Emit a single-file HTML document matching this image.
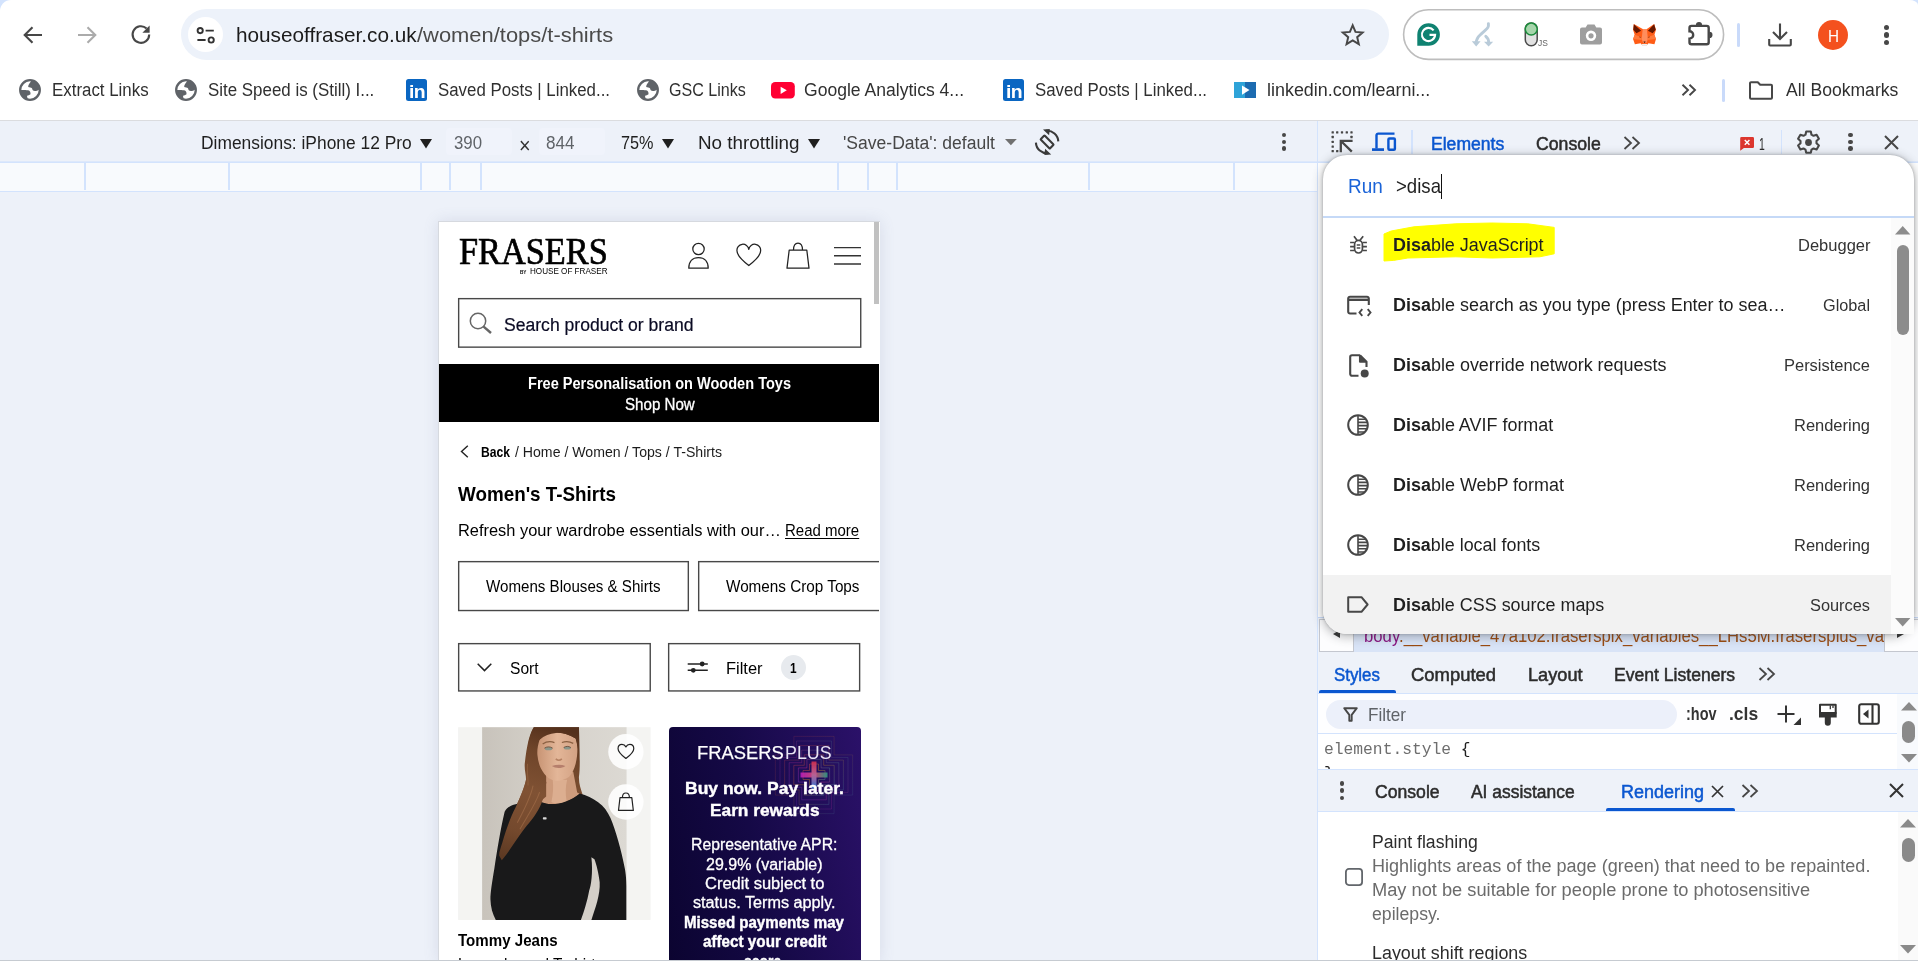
<!DOCTYPE html>
<html lang="en"><head><meta charset="utf-8"><title>Women's T-Shirts - DevTools</title>
<style>

html,body{margin:0;padding:0}
body{width:1918px;height:961px;overflow:hidden;position:relative;background:#fff;font-family:"Liberation Sans","DejaVu Sans",sans-serif;color:#1f1f1f}
body div,body svg,.t{position:absolute}
.t{white-space:nowrap;transform-origin:0 0;line-height:1;display:block}
svg{overflow:visible}
b{font-weight:700}

</style></head>
<body>
<div style="left:0px;top:0px;width:1918px;height:12px;background:#d3e3fd"></div>
<div style="left:0px;top:0px;width:1918px;height:120px;background:#fff;border-radius:11px 9px 0 0/11px 5px 0 0"></div>
<svg style="left:20px;top:22px;" width="26" height="26" viewBox="0 0 26 26"><path d="M22 13H5M12.5 5.2 4.7 13l7.8 7.8" fill="none" stroke="#474747" stroke-width="2.1" stroke-linejoin="miter"/></svg>
<svg style="left:74px;top:22px;" width="26" height="26" viewBox="0 0 26 26"><path d="M4 13h17M13.5 5.2 21.3 13l-7.8 7.8" fill="none" stroke="#ababab" stroke-width="2.1"/></svg>
<svg style="left:128px;top:22px;" width="26" height="26" viewBox="0 0 26 26"><path d="M21.2 12.5a8.3 8.3 0 1 1-2.6-6" fill="none" stroke="#474747" stroke-width="2.1"/><path d="M21.6 3.6v7.2h-7.2z" fill="#474747"/></svg>
<div style="left:181px;top:9px;width:1208px;height:51px;background:#edf2fa;border-radius:26px"></div>
<div style="left:188px;top:17px;width:35px;height:35px;background:#fff;border-radius:50%"></div>
<svg style="left:195px;top:24px;" width="22" height="22" viewBox="0 0 22 22"><g fill="none" stroke="#333" stroke-width="1.9"><circle cx="5.2" cy="6.6" r="2.6"/><path d="M10.6 6.6h8.2M2.4 16h8.2"/><circle cx="16.2" cy="16" r="2.6"/></g></svg>
<span class="t" style="left:235.8px;top:25px;font-size:20.6px;transform:scaleX(1.0074);color:#1b1b1b">houseoffraser.co.uk</span>
<span class="t" style="left:416.9px;top:25px;font-size:20.6px;transform:scaleX(1.0642);color:#4a4a4a">/women/tops/t-shirts</span>
<svg style="left:1341.3px;top:23px;" width="23.4" height="23.4" viewBox="0 0 26 26"><path d="M13 2.600l3.1 7.3 7.9.7-6 5.2 1.8 7.700L13 19.400l-6.8 4.100L8 15.8 2 10.600l7.9-.7z" fill="none" stroke="#474747" stroke-width="2.2" stroke-linejoin="miter"/></svg>
<svg style="left:1402px;top:8px;" width="324" height="54" viewBox="0 0 324 54"><rect x="1.6" y="1.8" width="320" height="49.6" rx="24.8" fill="none" stroke="#bdbdbd" stroke-width="1.6"/></svg>
<svg style="left:1416px;top:22px;" width="25" height="25" viewBox="0 0 25 25"><path d="M12.6 1.2a11.3 11.3 0 1 1 0 22.6H1.3V12.5A11.3 11.3 0 0 1 12.6 1.2z" fill="#0f8271"/><path d="M17.6 8.3a6.6 6.6 0 1 0 1.5 4.6h-5.6" fill="none" stroke="#fff" stroke-width="2.1"/></svg>
<svg style="left:1470px;top:20px;" width="26" height="28" viewBox="1470 20 26 28"><g fill="none" stroke="#b9cbd9" stroke-width="2.9" stroke-linecap="round"><path d="M1488.4 23.6v2.400c0 3-7.5 7-10.5 11.5-.8 1.5-1.5 3-1.8 4.5"/><path d="M1485.8 36.300c1.8 1.5 2.8 3.5 2.8 5.5"/></g><path d="M1471.8 41.200h8.800l-4.4 5.200zM1484 41.800h9.200l-4.6 4.600z" fill="#b9cbd9"/></svg>
<svg style="left:1524px;top:21px;" width="15" height="27" viewBox="1524 21 15 27"><rect x="1525.3" y="22.9" width="11.9" height="22.8" rx="5.95" fill="#e2e2e2" stroke="#4a4a4a" stroke-width="1.5"/><circle cx="1531.25" cy="29.1" r="6" fill="#a6d5ab" stroke="#1a8a3a" stroke-width="1.5"/></svg>
<span class="t" style="left:1538.4px;top:38.9px;font-size:8.8px;transform:scaleX(0.9629);color:#666">JS</span>
<svg style="left:1579px;top:24px;" width="24" height="22" viewBox="0 0 24 22"><path d="M8.5 0.500h7l1.8 3H21a2 2 0 0 1 2 2v13a2 2 0 0 1-2 2H3a2 2 0 0 1-2-2v-13a2 2 0 0 1 2-2h3.700z" fill="#9e9e9e"/><circle cx="12" cy="11.8" r="5.2" fill="#fff"/><circle cx="12" cy="11.8" r="2.6" fill="#9e9e9e"/></svg>
<svg style="left:1626px;top:14px;" width="100" height="42" viewBox="0 0 1918 806"><path d="M150 190 320 290h80L540 190l35 110-30 100 30 80-30 100-115-20-30 40h-90l-30-40-110 20-35-100 30-80-30-100z" fill="#ff5c16"/><path d="M150 195 290 320l-90 50-60-70zM540 195l30 105-60 70-90-50z" fill="#661800"/><path d="M320 290h80l20 190-30 80h-60l-30-80z" fill="#ff8d5d"/><path d="M165 400l135 40v60l-160-20zM545 400l-135 40v60l160-20z" fill="#ff7a3c"/><path d="M255 425l40 22-30 8zM455 425l-40 22 30 8z" fill="#8a2a08"/><path d="M335 528h40l-10 26h-20z" fill="#3d0c00"/><path d="M296 578h118l-22 28h-74z" fill="#e9f2f7"/></svg>
<svg style="left:1686px;top:19px;" width="28" height="28" viewBox="1686 19 28 28"><path d="M1691.5 25.900H1706.700a2 2 0 0 1 2 2V42.300a2 2 0 0 1-2 2H1691.500a2 2 0 0 1-2-2V38.600a3.7 3.7 0 0 0 0-7.400V27.900a2 2 0 0 1 2-2z" fill="none" stroke="#474747" stroke-width="2.4"/><path d="M1695.9 25.200a3.1 3.1 0 0 1 6.2 0zM1709.4 31.800a3.1 3.1 0 0 1 0 6.200z" fill="#474747"/></svg>
<div style="left:1737px;top:22.5px;width:3px;height:24px;background:#c9dafa;border-radius:1.500px"></div>
<svg style="left:1767px;top:22px;" width="26" height="26" viewBox="0 0 26 26"><path d="M13 1.500v15M6 10l7 7 7-7M2.2 17v5.500a1 1 0 0 0 1 1h19.600a1 1 0 0 0 1-1V17" fill="none" stroke="#474747" stroke-width="2.1"/></svg>
<div style="left:1818px;top:20px;width:30px;height:30px;background:#f4511e;border-radius:50%"></div>
<span class="t" style="left:1827.5px;top:27.5px;font-size:16.5px;transform:scaleX(0.9227);color:#fff">H</span>
<div style="left:1884.3px;top:24.6px;width:5.2px;height:5.2px;background:#474747;border-radius:50%"></div>
<div style="left:1884.3px;top:32.4px;width:5.2px;height:5.2px;background:#474747;border-radius:50%"></div>
<div style="left:1884.3px;top:40.2px;width:5.2px;height:5.2px;background:#474747;border-radius:50%"></div>
<svg style="left:19px;top:79px;" width="22" height="22" viewBox="0 0 22 22"><circle cx="11" cy="11" r="9.8" fill="#fff" stroke="#5f6368" stroke-width="2.3"/><path d="M12.4 1.500C10.7 4.3 9 6 9.2 8c1.3.6 2.8.4 3.8 1.3.3.9.4 1.7 1 2.3 1.5.7 3.8.6 6.2-1.200L20.5 7 17 3zM1.5 11c3.5-.2 6.5-.2 8.5.5 1.3.8 1.6 2 1.5 3.8-1 1-2.5 1-3.4 1.5-.2.8.2 1.6.9 3.200L5.5 18.5 2 15z" fill="#5f6368"/></svg>
<span class="t" style="left:51.7px;top:82px;font-size:17.6px;transform:scaleX(0.9591);color:#303030">Extract Links</span>
<svg style="left:175px;top:79px;" width="22" height="22" viewBox="0 0 22 22"><circle cx="11" cy="11" r="9.8" fill="#fff" stroke="#5f6368" stroke-width="2.3"/><path d="M12.4 1.500C10.7 4.3 9 6 9.2 8c1.3.6 2.8.4 3.8 1.3.3.9.4 1.7 1 2.3 1.5.7 3.8.6 6.2-1.200L20.5 7 17 3zM1.5 11c3.5-.2 6.5-.2 8.5.5 1.3.8 1.6 2 1.5 3.8-1 1-2.5 1-3.4 1.5-.2.8.2 1.6.9 3.200L5.5 18.5 2 15z" fill="#5f6368"/></svg>
<span class="t" style="left:207.5px;top:82px;font-size:17.6px;transform:scaleX(0.9608);color:#303030">Site Speed is (Still) I...</span>
<div style="left:405.7px;top:79.3px;width:21.6px;height:21.6px;background:#0a66c2;border-radius:2.5px"></div>
<span class="t" style="left:408.6px;top:82.6px;font-size:18.5px;transform:scaleX(1.0483);color:#fff;letter-spacing:-.5px"><b>in</b></span>
<span class="t" style="left:438px;top:82px;font-size:17.6px;transform:scaleX(0.9575);color:#303030">Saved Posts | Linked...</span>
<svg style="left:636.8px;top:79px;" width="22" height="22" viewBox="0 0 22 22"><circle cx="11" cy="11" r="9.8" fill="#fff" stroke="#5f6368" stroke-width="2.3"/><path d="M12.4 1.500C10.7 4.3 9 6 9.2 8c1.3.6 2.8.4 3.8 1.3.3.9.4 1.7 1 2.3 1.5.7 3.8.6 6.2-1.200L20.5 7 17 3zM1.5 11c3.5-.2 6.5-.2 8.5.5 1.3.8 1.6 2 1.5 3.8-1 1-2.5 1-3.4 1.5-.2.8.2 1.6.9 3.200L5.5 18.5 2 15z" fill="#5f6368"/></svg>
<span class="t" style="left:669.3px;top:82px;font-size:17.6px;transform:scaleX(0.9145);color:#303030">GSC Links</span>
<svg style="left:770.8px;top:81.8px;" width="23.8" height="16.6" viewBox="0 0 23.8 16.6"><rect width="23.8" height="16.6" rx="4.2" fill="#ff0033"/><path d="M9.6 4.700v7.200l6.2-3.600z" fill="#fff"/></svg>
<span class="t" style="left:804.3px;top:82px;font-size:17.6px;transform:scaleX(0.9976);color:#303030">Google Analytics 4...</span>
<div style="left:1002.7px;top:79.3px;width:21.6px;height:21.6px;background:#0a66c2;border-radius:2.5px"></div>
<span class="t" style="left:1005.6px;top:82.6px;font-size:18.5px;transform:scaleX(1.0483);color:#fff;letter-spacing:-.5px"><b>in</b></span>
<span class="t" style="left:1035.3px;top:82px;font-size:17.6px;transform:scaleX(0.9575);color:#303030">Saved Posts | Linked...</span>
<div style="left:1233.8px;top:82px;width:22px;height:16.2px;background:linear-gradient(90deg,#2ea3d8 0 50%,#1c6bb0 50%)"></div>
<svg style="left:1233.8px;top:82px;" width="22" height="16.2" viewBox="0 0 22 16.2"><path d="M8 3.500v9.200l7.5-4.600z" fill="#fff"/></svg>
<span class="t" style="left:1266.5px;top:82px;font-size:17.6px;transform:scaleX(1.0182);color:#303030">linkedin.com/learni...</span>
<svg style="left:1681px;top:84px;" width="16" height="12" viewBox="0 0 16 12"><path d="M1.5 0.8 7 6l-5.5 5.200M8.5 0.8 14 6l-5.5 5.2" fill="none" stroke="#474747" stroke-width="1.9"/></svg>
<div style="left:1722px;top:78.5px;width:3px;height:23.5px;background:#c9dafa;border-radius:1.500px"></div>
<svg style="left:1749px;top:80.5px;" width="24" height="19" viewBox="0 0 24 19"><path d="M2 1.200h6.800l2.4 2.600H22a1 1 0 0 1 1 1V16.800a1 1 0 0 1-1 1H2a1 1 0 0 1-1-1V2.200a1 1 0 0 1 1-1z" fill="none" stroke="#474747" stroke-width="2" stroke-linejoin="round"/></svg>
<span class="t" style="left:1785.5px;top:82px;font-size:17.6px;transform:scaleX(0.9988);color:#303030">All Bookmarks</span>
<div style="left:0px;top:120px;width:1918px;height:1px;background:#dbdcdf"></div>
<div style="left:0px;top:121px;width:1918px;height:840px;background:#edf1f9"></div>
<div style="left:0px;top:161px;width:1318px;height:1px;background:#dde8fb"></div>
<div style="left:0px;top:162px;width:1318px;height:1px;background:#d3e3fd"></div>
<div style="left:0px;top:163px;width:1318px;height:28px;background:#f8fafd"></div>
<div style="left:0px;top:191px;width:1318px;height:1px;background:#d3e3fd"></div>
<div style="left:83.5px;top:163px;width:2px;height:27px;background:#d3e3fd"></div>
<div style="left:228px;top:163px;width:2px;height:27px;background:#d3e3fd"></div>
<div style="left:419.5px;top:163px;width:2px;height:27px;background:#d3e3fd"></div>
<div style="left:448.5px;top:163px;width:2px;height:27px;background:#d3e3fd"></div>
<div style="left:479.5px;top:163px;width:2px;height:27px;background:#d3e3fd"></div>
<div style="left:837px;top:163px;width:2px;height:27px;background:#d3e3fd"></div>
<div style="left:866.5px;top:163px;width:2px;height:27px;background:#d3e3fd"></div>
<div style="left:895.5px;top:163px;width:2px;height:27px;background:#d3e3fd"></div>
<div style="left:1088px;top:163px;width:2px;height:27px;background:#d3e3fd"></div>
<div style="left:1232.5px;top:163px;width:2px;height:27px;background:#d3e3fd"></div>
<span class="t" style="left:201.3px;top:135.3px;font-size:17.6px;transform:scaleX(0.9883);color:#1f1f1f">Dimensions: iPhone 12 Pro</span>
<svg style="left:420.3px;top:138.5px;" width="12" height="9.5" viewBox="0 0 12 9.5"><path d="M0 0h12L6 9.500z" fill="#1f1f1f"/></svg>
<div style="left:446px;top:128px;width:66px;height:27px;background:#f0f3fb;border-radius:4px"></div>
<div style="left:539px;top:128px;width:66px;height:27px;background:#f0f3fb;border-radius:4px"></div>
<span class="t" style="left:454px;top:135.3px;font-size:17.6px;transform:scaleX(0.9537);color:#5f6368">390</span>
<span class="t" style="left:519.4px;top:134.6px;font-size:22.5px;transform:scaleX(0.8828);color:#333">×</span>
<span class="t" style="left:546px;top:135.3px;font-size:17.6px;transform:scaleX(0.9707);color:#5f6368">844</span>
<span class="t" style="left:620.5px;top:135.3px;font-size:17.6px;transform:scaleX(0.9228);color:#1f1f1f">75%</span>
<svg style="left:662px;top:138.5px;" width="12" height="9.5" viewBox="0 0 12 9.5"><path d="M0 0h12L6 9.500z" fill="#1f1f1f"/></svg>
<span class="t" style="left:697.5px;top:135.3px;font-size:17.6px;transform:scaleX(1.07);color:#1f1f1f">No throttling</span>
<svg style="left:807.5px;top:138.5px;" width="12" height="9.5" viewBox="0 0 12 9.5"><path d="M0 0h12L6 9.500z" fill="#1f1f1f"/></svg>
<span class="t" style="left:843px;top:135.3px;font-size:17.6px;transform:scaleX(0.997);color:#474747">'Save-Data': default</span>
<svg style="left:1005.1px;top:138.9px;" width="11.8" height="6.2" viewBox="0 0 11.8 6.2"><path d="M0 0h11.800L5.9 6.200z" fill="#707070"/></svg>
<svg style="left:1032px;top:127px;" width="30" height="30" viewBox="1032 127 30 30"><g fill="none" stroke="#3a3a3a" stroke-width="2.1"><rect x="1044.3" y="135.45" width="5.6" height="13.1" rx=".6" transform="rotate(-45 1047.1 142)"/><path d="M1046.1 130.800A11.2 11.2 0 0 1 1058.3 141.400M1035.9 142.600A11.2 11.2 0 0 0 1048.1 153.2"/></g><path d="M1043 129.600l6.8-.5-.7 6.200zM1051.2 154.400l-6.8.5.7-6.200z" fill="#3a3a3a"/></svg>
<div style="left:1281.5px;top:132.8px;width:4.6px;height:4.6px;background:#474747;border-radius:50%"></div>
<div style="left:1281.5px;top:139.6px;width:4.6px;height:4.6px;background:#474747;border-radius:50%"></div>
<div style="left:1281.5px;top:146.4px;width:4.6px;height:4.6px;background:#474747;border-radius:50%"></div>
<div style="left:438px;top:221px;width:442px;height:741px;background:#d6d9df;box-shadow:0 0 14px rgba(100,112,150,.16)"></div>
<div style="left:439px;top:222px;width:441px;height:739px;background:#fff;overflow:hidden">
<span class="t" style="left:19.5px;top:10.7px;font-size:37.8px;transform:scaleX(0.908);color:#000;-webkit-text-stroke:.7px #000;font-family:'Liberation Serif','DejaVu Serif',serif">FRASERS</span>
<span class="t" style="left:80.8px;top:46.6px;font-size:6.2px;transform:scaleX(0.755);color:#000;font-weight:700">BY</span>
<span class="t" style="left:90.5px;top:43.6px;font-size:9.6px;transform:scaleX(0.8453);color:#000">HOUSE OF FRASER</span>
<svg style="left:249px;top:20px;" width="21" height="27" viewBox="0 0 21 27"><g fill="none" stroke="#222" stroke-width="1.25"><circle cx="10.5" cy="7" r="5.7"/><path d="M0.8 26.2c0-6.5 3.5-10.6 9.7-10.6s9.7 4.1 9.7 10.600z" stroke-linejoin="round"/></g></svg>
<svg style="left:296.5px;top:21.5px;" width="26" height="23" viewBox="0 0 26 23"><path d="M12.8 21.500C5 15.5 1 11.5 1 7a5.8 5.8 0 0 1 11.8-1.600A5.8 5.8 0 0 1 24.6 7c0 4.5-4 8.5-11.8 14.500z" fill="none" stroke="#222" stroke-width="1.25" stroke-linejoin="round"/></svg>
<svg style="left:347px;top:20px;" width="24" height="27" viewBox="0 0 24 27"><g fill="none" stroke="#222" stroke-width="1.25" stroke-linejoin="round"><path d="M3.2 8h17.600l2.2 18.200H1z"/><path d="M7.5 8c0-4.5 1.8-7 4.5-7s4.5 2.5 4.5 7"/></g></svg>
<svg style="left:395px;top:22px;" width="27" height="24" viewBox="0 0 27 24"><path d="M0 3.600h27M0 11.700h27M0 20h27" stroke="#333" stroke-width="1.35" fill="none"/></svg>
<div style="left:435.3px;top:0px;width:4.7px;height:81.6px;background:#c1c1c1"></div>
<svg style="left:18.8px;top:76.2px;" width="403.4" height="49.8" viewBox="0 0 403.4 49.8"><rect x="0.65" y="0.65" width="402.09999999999997" height="48.5" fill="none" stroke="#484848" stroke-width="1.4"/></svg>
<svg style="left:30px;top:90px;" width="23" height="22" viewBox="0 0 23 22"><circle cx="9" cy="9" r="7.7" fill="none" stroke="#666" stroke-width="1.5"/><path d="M14.6 14.6 22 21" stroke="#666" stroke-width="2.4" fill="none"/></svg>
<span class="t" style="left:65px;top:93.5px;font-size:18px;transform:scaleX(0.9762);color:#0a0a23;-webkit-text-stroke:.2px #0a0a23">Search product or brand</span>
<div style="left:0px;top:142px;width:440.2px;height:58.4px;background:#000"></div>
<span class="t" style="left:89px;top:154px;font-size:15.8px;transform:scaleX(0.921);color:#fff"><b>Free Personalisation on Wooden Toys</b></span>
<span class="t" style="left:185.5px;top:175px;font-size:15.8px;transform:scaleX(0.9562);color:#fff;-webkit-text-stroke:.3px #fff">Shop Now</span>
<svg style="left:21px;top:223px;" width="9" height="13" viewBox="0 0 9 13"><path d="M7.8 0.8 1.5 6.500l6.3 5.7" fill="none" stroke="#222" stroke-width="1.4"/></svg>
<span class="t" style="left:42px;top:222.8px;font-size:14.6px;transform:scaleX(0.8312);color:#000"><b>Back</b></span>
<span class="t" style="left:76.2px;top:222.8px;font-size:14.6px;transform:scaleX(0.9667);color:#1c1c1c">/ Home / Women / Tops / T-Shirts</span>
<span class="t" style="left:19.4px;top:262px;font-size:20.25px;transform:scaleX(0.9297);color:#000"><b>Women's T-Shirts</b></span>
<span class="t" style="left:19.4px;top:300.8px;font-size:16.9px;transform:scaleX(0.9713);color:#000">Refresh your wardrobe essentials with our…</span>
<span class="t" style="left:345.8px;top:300.8px;font-size:16.9px;transform:scaleX(0.888);color:#000"><span style="text-decoration:underline;text-underline-offset:2px">Read more</span></span>
<svg style="left:18.9px;top:339.2px;" width="231" height="50.2" viewBox="0 0 231 50.2"><rect x="0.65" y="0.65" width="229.7" height="48.9" fill="none" stroke="#484848" stroke-width="1.4"/></svg>
<span class="t" style="left:47.2px;top:357.4px;font-size:15.8px;transform:scaleX(0.9571);color:#000">Womens Blouses &amp; Shirts</span>
<svg style="left:258.7px;top:339.2px;" width="231" height="50.2" viewBox="0 0 231 50.2"><rect x="0.65" y="0.65" width="229.7" height="48.9" fill="none" stroke="#484848" stroke-width="1.4"/></svg>
<span class="t" style="left:286.8px;top:357.4px;font-size:15.8px;transform:scaleX(0.9664);color:#000">Womens Crop Tops</span>
<svg style="left:18.9px;top:420.8px;" width="192.9" height="48.6" viewBox="0 0 192.9 48.6"><rect x="0.65" y="0.65" width="191.6" height="47.300000000000004" fill="none" stroke="#484848" stroke-width="1.4"/></svg>
<svg style="left:38px;top:441px;" width="15" height="9" viewBox="0 0 15 9"><path d="M0.7 0.7 7.5 7.600l6.8-6.9" fill="none" stroke="#222" stroke-width="1.5"/></svg>
<span class="t" style="left:70.6px;top:439px;font-size:16.9px;transform:scaleX(0.923);color:#000">Sort</span>
<svg style="left:229.2px;top:420.8px;" width="192.7" height="48.6" viewBox="0 0 192.7 48.6"><rect x="0.65" y="0.65" width="191.0" height="47.300000000000004" fill="none" stroke="#484848" stroke-width="1.4"/></svg>
<svg style="left:247px;top:438px;" width="24" height="15" viewBox="686 660 24 15"><g stroke="#222" stroke-width="1.4" fill="#222"><path d="M687.7 664h20.100M687.7 670.300h20.1" fill="none"/><circle cx="702.2" cy="664" r="2.4" stroke="none"/><circle cx="693.3" cy="670.3" r="2.4" stroke="none"/></g></svg>
<span class="t" style="left:286.8px;top:439px;font-size:16.9px;transform:scaleX(0.9748);color:#000">Filter</span>
<div style="left:342px;top:432.8px;width:25.4px;height:25.4px;background:#e7eaee;border-radius:50%"></div>
<span class="t" style="left:351.4px;top:437.8px;font-size:15px;transform:scaleX(0.791);color:#000"><b>1</b></span>
<svg style="left:11px;top:498px;" width="210" height="210" viewBox="0 0 961 961"><defs><linearGradient id="pg" x1="0" x2="1" y1="0" y2="0"><stop offset="0" stop-color="#c8c3bb"/><stop offset=".45" stop-color="#d5d1ca"/><stop offset="1" stop-color="#dcd9d3"/></linearGradient><linearGradient id="hg" gradientUnits="userSpaceOnUse" x1="480" y1="30" x2="300" y2="640"><stop offset="0" stop-color="#54301c"/><stop offset=".2" stop-color="#6e4429"/><stop offset=".5" stop-color="#805234"/><stop offset=".8" stop-color="#74492d"/><stop offset="1" stop-color="#5e3a23"/></linearGradient><linearGradient id="sk" x1="0" x2="1" y1="0" y2="0"><stop offset="0" stop-color="#c89474"/><stop offset=".5" stop-color="#e3b698"/><stop offset="1" stop-color="#d3a284"/></linearGradient><clipPath id="pc"><rect x="147" y="33" width="661" height="882"/></clipPath></defs>
<rect x="37" y="33" width="881" height="882" fill="#f4f4f2"/>
<rect x="147" y="33" width="661" height="882" fill="url(#pg)"/>
<g clip-path="url(#pc)">
<path d="M385 30C365 60 352 110 342 200c-2 30 6 50 6 72-4 26-22 72-48 128-22 40-46 110-60 160-8 26-16 46-15 60l12 22 370-300c-8-26-18-50-17-82 6-36 4-100 0-230z" fill="url(#hg)"/>
<path d="M440 250v100l-28 24c40 24 120 16 182-36l-12-6-18-95z" fill="#cd9b7c"/>
<path d="M470 275c4 30 2 66-6 100 20 10 46 8 70-2-6-34-6-70 2-100z" fill="#dcae90"/>
<path d="M410 90c-8 24-12 48-10 70 2 24 8 44 15 60 10 20 22 36 35 45 16 10 34 14 50 13 16-2 32-8 45-18 14-14 24-36 30-60 6-24 8-48 8-70 0-16-2-32-8-45-30-20-60-28-90-26-28 2-54 12-75 31z" fill="url(#sk)"/>
<path d="M385 30c-16 30-24 60-28 90 16-4 36-14 53-30 10-14 24-24 42-30 40-8 84 0 123 25 4 14 8 30 8 50 6-36 8-70 7-105z" fill="url(#hg)"/>
<path d="M424 110c16-11 36-13 54-7M512 103c16-6 36-5 52 4" stroke="#8a6042" stroke-width="6" fill="none"/>
<ellipse cx="451" cy="131" rx="17" ry="7" fill="#8a968a"/><ellipse cx="537" cy="128" rx="16" ry="7" fill="#8a968a"/>
<path d="M432 129c12-8 26-8 38 0M520 126c11-7 23-7 33 0" stroke="#58402f" stroke-width="3.5" fill="none"/>
<path d="M484 178c8 7 20 7 28 0" stroke="#b68264" stroke-width="7" fill="none"/>
<path d="M466 211c20-8 44-8 62-1-16 12-44 13-62 1z" fill="#b67f6c"/>
<path d="M250 420c10-20 30-30 50-35 30-9 72-14 112-13 40 24 120 16 182-36 30 8 60 22 84 40 26 18 44 44 57 74 24 60 48 140 65 230 4 20 8 60 8 80v160H212c-16-30-26-60-27-100 0-30 8-80 18-140 12-80 28-180 47-260z" fill="#19191a"/>
<path d="M647 628C655 700 645 760 637 780 628 830 612 880 599 915L647 915C665 860 688 800 685 742 680 700 670 660 661 637z" fill="#d4cfc8"/>
<path d="M348 272c-4 26-22 72-48 128-22 40-46 110-60 160-8 26-16 46-15 60l12 22c20-24 38-50 54-74 20-30 40-60 60-84 24-28 50-60 68-104 10-24 16-50 22-96-12-10-24-24-32-40z" fill="url(#hg)"/>
<path d="M380 300c-10 50-40 110-72 170M410 330c-16 50-50 100-90 170" stroke="#a8724c" stroke-width="5" fill="none" opacity=".55"/>
<path d="M355 200c-4 40 4 70 2 100" stroke="#a8724c" stroke-width="5" fill="none" opacity=".4"/>
<rect x="425" y="445" width="17" height="10" rx="3" fill="#d8d8d8"/>
</g>
<circle cx="805" cy="145" r="81" fill="#fff" fill-opacity=".88"/>
<circle cx="805" cy="375" r="81" fill="#fff" fill-opacity=".88"/>
<path d="M805 176c-27-21-36-32-36-45 0-11 8-19 18-19 7 0 14 4 18 11 4-7 11-11 18-11 10 0 18 8 18 19 0 13-9 24-36 45z" fill="none" stroke="#222" stroke-width="5.5" stroke-linejoin="round"/>
<path d="M778 355h54l7 59h-68z" fill="none" stroke="#222" stroke-width="5.5" stroke-linejoin="round"/><path d="M789 355c0-14 6-21 16-21s16 7 16 21" fill="none" stroke="#222" stroke-width="5.5"/>
</svg>
<span class="t" style="left:19.4px;top:710.5px;font-size:16.9px;transform:scaleX(0.894);color:#000"><b>Tommy Jeans</b></span>
<span class="t" style="left:19.4px;top:734.5px;font-size:16.9px;transform:scaleX(0.9065);color:#000">Long sleeved T-shirt</span>
<div style="left:440.2px;top:81.6px;width:1px;height:660px;background:#fff"></div>
<div style="left:229.8px;top:505.2px;width:192px;height:240px;background:linear-gradient(78deg,#0b0430 0%,#150946 45%,#2b1169 100%);border-radius:4px 4px 0 0;overflow:hidden">
<svg style="left:99.9px;top:2.6px;" width="90" height="90" viewBox="-45 -45 90 90"><defs><linearGradient id="ph" x1="0" x2="1" y1="0" y2="0"><stop offset="0" stop-color="#c41fc0"/><stop offset=".5" stop-color="#e0507a"/><stop offset="1" stop-color="#2fa184"/></linearGradient><linearGradient id="pv" x1="0" x2="0" y1="0" y2="1"><stop offset="0" stop-color="#e0304f"/><stop offset=".5" stop-color="#d070a0"/><stop offset="1" stop-color="#2f86e6"/></linearGradient><linearGradient id="ps0" x1="0" x2="1" y1="0" y2="1"><stop offset="0" stop-color="#d02a5a"/><stop offset=".5" stop-color="#c07a20"/><stop offset="1" stop-color="#2a8ac8"/></linearGradient><linearGradient id="ps1" x1="0" x2="1" y1="1" y2="0"><stop offset="0" stop-color="#6a3ad0"/><stop offset=".5" stop-color="#c02a8a"/><stop offset="1" stop-color="#2a9a8a"/></linearGradient><filter id="pb" x="-30%" y="-30%" width="160%" height="160%"><feGaussianBlur stdDeviation=".7"/></filter></defs><path d="M-4.5 -11.0h9.0v6.5h6.5v9.0h-6.5v6.5h-9.0v-6.5h-6.5v-9.0h6.5z" fill="none" stroke="url(#ps0)" stroke-width=".9" opacity="0.5"/><path d="M-7.1 -15.6h14.2v8.5h8.5v14.2h-8.5v8.5h-14.2v-8.5h-8.5v-14.2h8.5z" fill="none" stroke="url(#ps1)" stroke-width=".9" opacity="0.45"/><path d="M-9.7 -20.2h19.4v10.5h10.5v19.4h-10.5v10.5h-19.4v-10.5h-10.5v-19.4h10.5z" fill="none" stroke="url(#ps0)" stroke-width=".9" opacity="0.39"/><path d="M-12.3 -24.799999999999997h24.6v12.499999999999996h12.499999999999996v24.6h-12.499999999999996v12.499999999999996h-24.6v-12.499999999999996h-12.499999999999996v-24.6h12.499999999999996z" fill="none" stroke="url(#ps1)" stroke-width=".9" opacity="0.33"/><path d="M-14.9 -29.4h29.8v14.499999999999998h14.499999999999998v29.8h-14.499999999999998v14.499999999999998h-29.8v-14.499999999999998h-14.499999999999998v-29.8h14.499999999999998z" fill="none" stroke="url(#ps0)" stroke-width=".9" opacity="0.28"/><path d="M-17.5 -34.0h35.0v16.5h16.5v35.0h-16.5v16.5h-35.0v-16.5h-16.5v-35.0h16.5z" fill="none" stroke="url(#ps1)" stroke-width=".9" opacity="0.22"/><path d="M-20.1 -38.599999999999994h40.2v18.499999999999993h18.499999999999993v40.2h-18.499999999999993v18.499999999999993h-40.2v-18.499999999999993h-18.499999999999993v-40.2h18.499999999999993z" fill="none" stroke="url(#ps0)" stroke-width=".9" opacity="0.17"/><g filter="url(#pb)" opacity=".85"><rect x="-13.5" y="-2.5" width="27" height="5" fill="url(#ph)"/><rect x="-2.5" y="-13.5" width="5" height="27" fill="url(#pv)"/></g></svg>
<span class="t" style="left:28.5px;top:16.1px;font-size:19.2px;transform:scaleX(0.9565);color:#fff"><span style="-webkit-text-stroke:.25px #fff">FRASERS</span></span>
<span class="t" style="left:116.6px;top:16.1px;font-size:19.2px;transform:scaleX(0.9297);color:#e8e4f4">PLUS</span>
<span class="t" style="left:16.4px;top:52.8px;font-size:17.3px;transform:scaleX(1.0129);color:#fff;-webkit-text-stroke:.4px #fff"><b>Buy now. Pay later.</b></span>
<span class="t" style="left:41.1px;top:74.8px;font-size:17.3px;transform:scaleX(0.9999);color:#fff;-webkit-text-stroke:.4px #fff"><b>Earn rewards</b></span>
<span class="t" style="left:22.5px;top:110.1px;font-size:15.8px;transform:scaleX(0.9984);color:#fff;-webkit-text-stroke:.3px #fff">Representative APR:</span>
<span class="t" style="left:37.5px;top:129.4px;font-size:15.8px;transform:scaleX(1.0128);color:#fff;-webkit-text-stroke:.3px #fff">29.9% (variable)</span>
<span class="t" style="left:35.8px;top:148.8px;font-size:15.8px;transform:scaleX(1.0459);color:#fff;-webkit-text-stroke:.3px #fff">Credit subject to</span>
<span class="t" style="left:24.4px;top:168px;font-size:15.8px;transform:scaleX(1.0258);color:#fff;-webkit-text-stroke:.3px #fff">status. Terms apply.</span>
<span class="t" style="left:15.7px;top:187.8px;font-size:15.8px;transform:scaleX(0.9541);color:#fff;-webkit-text-stroke:.4px #fff"><b>Missed payments may</b></span>
<span class="t" style="left:33.9px;top:207.1px;font-size:15.8px;transform:scaleX(0.9643);color:#fff;-webkit-text-stroke:.4px #fff"><b>affect your credit</b></span>
<span class="t" style="left:75.2px;top:227.1px;font-size:15.8px;transform:scaleX(0.8808);color:#fff;-webkit-text-stroke:.4px #fff"><b>score.</b></span>
</div>
</div>
<div style="left:1317px;top:121px;width:1px;height:840px;background:#d3e3fd"></div>
<div style="left:1318px;top:121px;width:600px;height:41px;background:#eef2f9"></div>
<div style="left:1318px;top:161px;width:600px;height:1px;background:#dde8fb"></div>
<div style="left:1318px;top:162px;width:600px;height:1px;background:#d3e3fd"></div>
<div style="left:1318px;top:163px;width:600px;height:457px;background:#fff"></div>
<svg style="left:1330px;top:130px;" width="24" height="24" viewBox="1330 130 24 24"><g fill="#474747"><rect x="1331.55" y="131.25" width="2.3" height="2.3" rx=".5"/><rect x="1336.05" y="131.25" width="2.3" height="2.3" rx=".5"/><rect x="1340.85" y="131.25" width="2.3" height="2.3" rx=".5"/><rect x="1345.65" y="131.25" width="2.3" height="2.3" rx=".5"/><rect x="1350.35" y="131.25" width="2.3" height="2.3" rx=".5"/><rect x="1331.55" y="135.85" width="2.3" height="2.3" rx=".5"/><rect x="1331.55" y="140.75" width="2.3" height="2.3" rx=".5"/><rect x="1331.55" y="145.45" width="2.3" height="2.3" rx=".5"/><rect x="1331.55" y="150.05" width="2.3" height="2.3" rx=".5"/><rect x="1350.35" y="135.85" width="2.3" height="2.3" rx=".5"/><rect x="1336.05" y="150.05" width="2.3" height="2.3" rx=".5"/></g><path d="M1352.6 140.800H1340.800V152.300M1341.2 141.200l10.6 10.4" fill="none" stroke="#474747" stroke-width="2.3"/></svg>
<svg style="left:1370px;top:131px;" width="28" height="22" viewBox="1370 131 28 22"><g fill="none" stroke="#0b57d0" stroke-width="2.4"><path d="M1376.5 148.500V135.300a1.7 1.7 0 0 1 1.7-1.700H1394.5"/><path d="M1372 149.600h12" stroke-width="2.7"/><rect x="1388.4" y="138.5" width="6.5" height="11.3" rx="1"/></g></svg>
<div style="left:1411px;top:130px;width:2px;height:24px;background:#d3e3fd"></div>
<span class="t" style="left:1430.6px;top:136.3px;font-size:17.6px;transform:scaleX(0.998);color:#0b57d0;-webkit-text-stroke:.5px currentColor;">Elements</span>
<span class="t" style="left:1535.8px;top:136.3px;font-size:17.6px;transform:scaleX(1.0037);color:#2c2c2c;-webkit-text-stroke:.5px currentColor;">Console</span>
<svg style="left:1623px;top:136px;" width="18" height="14" viewBox="0 0 18 14"><path d="M1.5 1 8 7l-6.5 6M9.5 1 16 7l-6.5 6" fill="none" stroke="#474747" stroke-width="1.8"/></svg>
<svg style="left:1739.8px;top:136.7px;" width="14.2" height="13.8" viewBox="0 0 16 16"><path d="M1.5 0h13a1.5 1.5 0 0 1 1.5 1.500v9.800a1.5 1.5 0 0 1-1.5 1.500H4.300L0 16V1.500A1.5 1.5 0 0 1 1.5 0z" fill="#dc362e"/><path d="M5.3 3.600l5.4 5.400M10.7 3.6 5.3 9" stroke="#fff" stroke-width="1.7"/></svg>
<span class="t" style="left:1758.8px;top:137.3px;font-size:16px;transform:scaleX(0.6512);color:#2c2c2c">1</span>
<div style="left:1781px;top:130px;width:1px;height:24px;background:#d3e3fd"></div>
<svg style="left:1797px;top:130.5px;" width="23" height="23" viewBox="0 0 23 23"><g transform="translate(11.5 11.5)"><path d="M-2.3-11h4.600l.7 3.2 2 1.1 3.1-1 2.3 4-2.4 2.200v2.300L10.4 3 8.1 7l-3.1-1-2 1.1-.7 3.200h-4.600l-.7-3.2-2-1.1-3.1 1-2.3-4 2.4-2.200V-1.500L-10.4-3.700l2.3-4 3.1 1 2-1.100z" fill="none" stroke="#474747" stroke-width="2.1" stroke-linejoin="round"/><circle r="3.4" fill="#474747"/></g></svg>
<div style="left:1848.2px;top:132.8px;width:4.6px;height:4.6px;background:#474747;border-radius:50%"></div>
<div style="left:1848.2px;top:139.6px;width:4.6px;height:4.6px;background:#474747;border-radius:50%"></div>
<div style="left:1848.2px;top:146.4px;width:4.6px;height:4.6px;background:#474747;border-radius:50%"></div>
<svg style="left:1884px;top:135px;" width="15" height="15" viewBox="0 0 15 15"><path d="M1 1l13 13M14 1 1 14" stroke="#474747" stroke-width="2" fill="none"/></svg>
<div style="left:1318px;top:617px;width:600px;height:1px;background:#c9daf8"></div>
<div style="left:1318px;top:618px;width:600px;height:35px;background:#eef2f9"></div>
<div style="left:1319px;top:619px;width:34.6px;height:32.6px;background:#fdfdfe;border:1px solid #c4c7cf;box-sizing:border-box"></div>
<div style="left:1884.4px;top:619px;width:34.6px;height:32.6px;background:#fdfdfe;border:1px solid #c4c7cf;box-sizing:border-box"></div>
<svg style="left:1333px;top:630px;" width="8" height="8" viewBox="0 0 8 8"><path d="M7 0v8L0 4z" fill="#333"/></svg>
<svg style="left:1897px;top:630px;" width="8" height="8" viewBox="0 0 8 8"><path d="M0 0v8l7-4z" fill="#333"/></svg>
<div style="left:1353.6px;top:619px;width:530.8px;height:33px;background:#d9e4f7;overflow:hidden">
<span class="t" style="left:10.9px;top:9.2px;font-size:17.6px;transform:scaleX(0.9499);color:#9a4a10"><span style="color:#881280">body</span>.__variable_47a102.frasersplx_variables__LHs5M.frasersplus_var</span>
</div>
<div style="left:1318px;top:653px;width:600px;height:40px;background:#eef2f9"></div>
<span class="t" style="left:1333.8px;top:667.3px;font-size:17.6px;transform:scaleX(0.9578);color:#0b57d0;-webkit-text-stroke:.5px currentColor;">Styles</span>
<div style="left:1318.5px;top:690px;width:77px;height:3px;background:#0b57d0;border-radius:2px 2px 0 0"></div>
<span class="t" style="left:1411.4px;top:667.3px;font-size:17.6px;transform:scaleX(1.047);color:#2c2c2c;-webkit-text-stroke:.5px currentColor;">Computed</span>
<span class="t" style="left:1528px;top:667.3px;font-size:17.6px;transform:scaleX(1.0335);color:#2c2c2c;-webkit-text-stroke:.5px currentColor;">Layout</span>
<span class="t" style="left:1613.6px;top:667.3px;font-size:17.6px;transform:scaleX(0.9985);color:#2c2c2c;-webkit-text-stroke:.5px currentColor;">Event Listeners</span>
<svg style="left:1758px;top:667px;" width="18" height="14" viewBox="0 0 18 14"><path d="M1.5 1 8 7l-6.5 6M9.5 1 16 7l-6.5 6" fill="none" stroke="#474747" stroke-width="1.8"/></svg>
<div style="left:1318px;top:693px;width:600px;height:1px;background:#d3e3fd"></div>
<div style="left:1318px;top:694px;width:600px;height:40px;background:#fefeff"></div>
<div style="left:1326px;top:700px;width:351px;height:28.5px;background:#ecf0fa;border-radius:15px"></div>
<svg style="left:1343px;top:707px;" width="15" height="15" viewBox="0 0 15 15"><path d="M1.2 1.200h12.600L8.7 7.800V13.800H6.300V7.800z" fill="none" stroke="#474747" stroke-width="1.9" stroke-linejoin="round"/></svg>
<span class="t" style="left:1368px;top:707.1px;font-size:17.8px;transform:scaleX(0.9616);color:#5f6368">Filter</span>
<span class="t" style="left:1686.2px;top:706.3px;font-size:17.6px;transform:scaleX(0.8212);color:#333;font-weight:600">:hov</span>
<span class="t" style="left:1729.3px;top:706.3px;font-size:17.6px;transform:scaleX(0.9946);color:#333;font-weight:600">.cls</span>
<svg style="left:1777px;top:705px;" width="24" height="20" viewBox="0 0 24 20"><path d="M9 0.500v17M0.5 9h17" stroke="#333" stroke-width="2" fill="none"/><path d="M24 12.500v7.500h-7.500z" fill="#333"/></svg>
<svg style="left:1817px;top:702px;" width="22" height="26" viewBox="1817 702 22 26"><path d="M1820 704.8h15.700v8.200h-15.700z" fill="none" stroke="#333" stroke-width="2" stroke-linejoin="round"/><path d="M1819 712.300h17.700v5.200h-17.700z" fill="#333"/><path d="M1824.8 717h6v5.700a3 3 0 0 1-6 0z" fill="#333"/><path d="M1830.3 705.500v3.800M1833 705.500v2.6" stroke="#333" stroke-width="1.3"/></svg>
<svg style="left:1858px;top:703px;" width="22" height="22" viewBox="0 0 22 22"><rect x="1.2" y="1.2" width="19.6" height="19.6" rx="2" fill="none" stroke="#333" stroke-width="2.1"/><path d="M14.5 1.500v19" stroke="#333" stroke-width="2.1"/><path d="M10.5 6.500v9L5 11z" fill="#333"/></svg>
<div style="left:1318px;top:733px;width:579px;height:1px;background:#d3e3fd"></div>
<div style="left:1318px;top:734px;width:579px;height:36px;background:#fff"></div>
<span class="t" style="left:1324.4px;top:740.8px;font-size:17px;transform:scaleX(0.958);color:#1f1f1f;font-family:'Liberation Mono','DejaVu Sans Mono',monospace"><span style="color:#6e6e6e">element.style</span> {</span>
<span class="t" style="left:1324.4px;top:764.8px;font-size:17px;transform:scaleX(0.9605);color:#1f1f1f;font-family:'Liberation Mono','DejaVu Sans Mono',monospace">}</span>
<div style="left:1897px;top:694px;width:21px;height:76px;background:#f8fafd"></div>
<svg style="left:1899.5px;top:702px;" width="18" height="9" viewBox="0 0 18 9"><path d="M9 0l8 8.500H1z" fill="#8a8a8a"/></svg>
<div style="left:1902px;top:721px;width:13px;height:21.5px;background:#8a8a8a;border-radius:6.5px"></div>
<svg style="left:1899.5px;top:754px;" width="18" height="9" viewBox="0 0 18 9"><path d="M9 8.5 1 0h16z" fill="#8a8a8a"/></svg>
<div style="left:1318px;top:769px;width:600px;height:1px;background:#d3e3fd"></div>
<div style="left:1318px;top:770px;width:600px;height:41px;background:#eef2f9"></div>
<div style="left:1339.5px;top:781px;width:4.6px;height:4.6px;background:#474747;border-radius:50%"></div>
<div style="left:1339.5px;top:788.3px;width:4.6px;height:4.6px;background:#474747;border-radius:50%"></div>
<div style="left:1339.5px;top:795.6px;width:4.6px;height:4.6px;background:#474747;border-radius:50%"></div>
<span class="t" style="left:1375px;top:784.3px;font-size:17.6px;transform:scaleX(1.0006);color:#2c2c2c;-webkit-text-stroke:.5px currentColor;">Console</span>
<span class="t" style="left:1471.4px;top:784.3px;font-size:17.6px;transform:scaleX(0.9901);color:#2c2c2c;-webkit-text-stroke:.5px currentColor;">AI assistance</span>
<span class="t" style="left:1621.4px;top:784.3px;font-size:17.6px;transform:scaleX(1.0211);color:#0b57d0;-webkit-text-stroke:.5px currentColor;">Rendering</span>
<svg style="left:1711px;top:785px;" width="13" height="13" viewBox="0 0 13 13"><path d="M1 1l11 11M12 1 1 12" stroke="#333" stroke-width="1.7" fill="none"/></svg>
<div style="left:1606px;top:808px;width:129px;height:3px;background:#0b57d0;border-radius:2px 2px 0 0"></div>
<svg style="left:1741px;top:784px;" width="18" height="14" viewBox="0 0 18 14"><path d="M1.5 1 8 7l-6.5 6M9.5 1 16 7l-6.5 6" fill="none" stroke="#474747" stroke-width="1.8"/></svg>
<svg style="left:1889px;top:783px;" width="15" height="15" viewBox="0 0 15 15"><path d="M1 1l13 13M14 1 1 14" stroke="#333" stroke-width="2" fill="none"/></svg>
<div style="left:1318px;top:811px;width:600px;height:1px;background:#d3e3fd"></div>
<div style="left:1318px;top:812px;width:580px;height:149px;background:#fff"></div>
<div style="left:1898px;top:812px;width:20px;height:149px;background:#fafafa"></div>
<svg style="left:1899px;top:819px;" width="18" height="9" viewBox="0 0 18 9"><path d="M9 0l8 8.500H1z" fill="#8a8a8a"/></svg>
<div style="left:1902px;top:838px;width:13px;height:24px;background:#8a8a8a;border-radius:6.500px"></div>
<svg style="left:1899px;top:945px;" width="18" height="9" viewBox="0 0 18 9"><path d="M9 8.5 1 0h16z" fill="#8a8a8a"/></svg>
<span class="t" style="left:1371.9px;top:834px;font-size:17.6px;transform:scaleX(1.0015);color:#2c2c2c">Paint flashing</span>
<span class="t" style="left:1371.9px;top:858px;font-size:17.6px;transform:scaleX(1.0253);color:#6b6b6b">Highlights areas of the page (green) that need to be repainted.</span>
<span class="t" style="left:1371.9px;top:882px;font-size:17.6px;transform:scaleX(1.0368);color:#6b6b6b">May not be suitable for people prone to photosensitive</span>
<span class="t" style="left:1371.9px;top:906px;font-size:17.6px;transform:scaleX(1.0038);color:#6b6b6b">epilepsy.</span>
<svg style="left:1344px;top:866.5px;" width="20" height="20" viewBox="0 0 20 20"><rect x="1.9" y="1.9" width="16.2" height="16.2" rx="3" fill="#fff" stroke="#62666b" stroke-width="1.8"/></svg>
<span class="t" style="left:1371.9px;top:944.5px;font-size:17.6px;transform:scaleX(1.0178);color:#2c2c2c">Layout shift regions</span>
<div style="left:1323px;top:155px;width:591px;height:479px;background:#fff;border-radius:24px;box-shadow:0 2px 10px 2px rgba(60,64,67,.30),0 0 3px rgba(60,64,67,.35);overflow:hidden">
<span class="t" style="left:25.2px;top:20px;font-size:21px;transform:scaleX(0.9006);color:#1a63d8">Run</span>
<span class="t" style="left:72.6px;top:20px;font-size:21px;transform:scaleX(0.8859);color:#1f1f1f">&gt;disa</span>
<div style="left:118px;top:19px;width:1.3px;height:25px;background:#111"></div>
<div style="left:0px;top:61px;width:591px;height:2px;background:#c5d9f7"></div>
<div style="left:0px;top:420px;width:568.5px;height:60px;background:#f2f2f2"></div>
<svg style="left:60px;top:67px;" width="173" height="40" viewBox="1383 222 173 40"><path d="M1384 234 1391.2 231 1413.9 226.8 1455.9 223.8 1491.9 223 1527.8 223.8 1554.2 227.400V253.800L1539.8 256.8 1491.9 258 1455.9 256.8 1407.9 258 1393.6 260.4 1384 261z" fill="#ffff00" stroke="#ffff00" stroke-width="1" stroke-linejoin="round"/></svg>
<span class="t" style="left:70px;top:81.3px;font-size:18px;transform:scaleX(0.9967);color:#1f1f1f"><b>Disa</b>ble JavaScript</span>
<span class="t" style="left:474.5px;top:83.3px;font-size:16.8px;transform:scaleX(0.9835);color:#333">Debugger</span>
<span class="t" style="left:70px;top:141.3px;font-size:18px;transform:scaleX(0.9982);color:#1f1f1f"><b>Disa</b>ble search as you type (press Enter to sea…</span>
<span class="t" style="left:500px;top:143.3px;font-size:16.8px;transform:scaleX(0.9688);color:#333">Global</span>
<span class="t" style="left:70px;top:201.3px;font-size:18px;transform:scaleX(0.9976);color:#1f1f1f"><b>Disa</b>ble override network requests</span>
<span class="t" style="left:461px;top:203.3px;font-size:16.8px;transform:scaleX(0.9808);color:#333">Persistence</span>
<span class="t" style="left:70px;top:261.3px;font-size:18px;transform:scaleX(0.9972);color:#1f1f1f"><b>Disa</b>ble AVIF format</span>
<span class="t" style="left:471px;top:263.3px;font-size:16.8px;transform:scaleX(0.9814);color:#333">Rendering</span>
<span class="t" style="left:70px;top:321.3px;font-size:18px;transform:scaleX(0.9974);color:#1f1f1f"><b>Disa</b>ble WebP format</span>
<span class="t" style="left:471px;top:323.3px;font-size:16.8px;transform:scaleX(0.9814);color:#333">Rendering</span>
<span class="t" style="left:70px;top:381.3px;font-size:18px;transform:scaleX(0.9945);color:#1f1f1f"><b>Disa</b>ble local fonts</span>
<span class="t" style="left:471px;top:383.3px;font-size:16.8px;transform:scaleX(0.9814);color:#333">Rendering</span>
<span class="t" style="left:70px;top:441.3px;font-size:18px;transform:scaleX(0.9962);color:#1f1f1f"><b>Disa</b>ble CSS source maps</span>
<span class="t" style="left:487px;top:443.3px;font-size:16.8px;transform:scaleX(0.9746);color:#333">Sources</span>
<svg style="left:25px;top:78px;" width="22" height="23" viewBox="1348 233 22 23"><g fill="none" stroke="#474747" stroke-width="1.7"><rect x="1354.6" y="240.4" width="7.8" height="12.6" rx="3.9"/><path d="M1354.3 242.500H1350.100M1354.3 246.600H1350.100M1354.3 250.500H1350.100M1362.7 242.500h4.200M1362.7 246.600h4.200M1362.7 250.500h4.200M1357 240.3 1354 236.200M1360 240.300l3.2-4.100M1356.7 245h3.600M1356.7 248h3.6"/></g></svg>
<svg style="left:23.8px;top:139.6px;" width="25" height="23" viewBox="0 0 25 23"><g fill="none" stroke="#474747" stroke-width="2.1"><path d="M9.5 18.500H3a1.8 1.8 0 0 1-1.8-1.800V3.500A1.8 1.8 0 0 1 3 1.700h17A1.8 1.8 0 0 1 21.8 3.500V10"/><path d="M1.2 4.800h20.6" stroke-width="2.4"/><path d="M15.3 14.2 12.5 17.500l2.8 3.300M20.7 14.200l2.8 3.3-2.8 3.3" stroke-width="1.9"/></g></svg>
<svg style="left:26px;top:199px;" width="20" height="24" viewBox="0 0 20 24"><path d="M11 1.200H3a1.8 1.8 0 0 0-1.8 1.800v17A1.8 1.8 0 0 0 3 21.800h6.500M11 1.200l6.5 6.500V13M11 1.200v6.500h6.5" fill="none" stroke="#474747" stroke-width="2.1" stroke-linejoin="round"/><circle cx="15.7" cy="19.5" r="4" fill="#474747"/><path d="M11 1.200v6.500h6.500z" fill="#474747"/></svg>
<svg style="left:24px;top:259px;" width="22" height="22" viewBox="0 0 22 22"><circle cx="11" cy="11" r="9.8" fill="none" stroke="#474747" stroke-width="2"/><path d="M11 1.500v19M11 5.200h7.600M11 8.400h9.400M11 11.600h9.800M11 14.800h9M11 18h6.8" stroke="#474747" stroke-width="1.6" fill="none"/></svg>
<svg style="left:24px;top:319px;" width="22" height="22" viewBox="0 0 22 22"><circle cx="11" cy="11" r="9.8" fill="none" stroke="#474747" stroke-width="2"/><path d="M11 1.500v19M11 5.200h7.600M11 8.400h9.400M11 11.600h9.800M11 14.800h9M11 18h6.8" stroke="#474747" stroke-width="1.6" fill="none"/></svg>
<svg style="left:24px;top:379px;" width="22" height="22" viewBox="0 0 22 22"><circle cx="11" cy="11" r="9.8" fill="none" stroke="#474747" stroke-width="2"/><path d="M11 1.500v19M11 5.200h7.600M11 8.400h9.400M11 11.600h9.800M11 14.800h9M11 18h6.8" stroke="#474747" stroke-width="1.6" fill="none"/></svg>
<svg style="left:24px;top:441.4px;" width="22" height="17" viewBox="0 0 22 17"><path d="M1.2 1.200h13.300L20.6 8.500l-6.1 7.300H1.200z" fill="none" stroke="#474747" stroke-width="2" stroke-linejoin="round"/></svg>
</div>
<div style="left:1891.3px;top:218px;width:22.8px;height:415.8px;background:#fbfbfb"></div>
<svg style="left:1895px;top:225.5px;" width="15.4" height="8.4" viewBox="0 0 15.4 8.4"><path d="M7.7 0l7.7 8.400H0z" fill="#8c8c8c"/></svg>
<div style="left:1896.5px;top:245px;width:12px;height:90px;background:#8c8c8c;border-radius:6px"></div>
<svg style="left:1895px;top:617.8px;" width="15.4" height="8.4" viewBox="0 0 15.4 8.4"><path d="M7.7 8.4 0 0h15.400z" fill="#8c8c8c"/></svg>
<div style="left:0px;top:960px;width:1918px;height:1px;background:#c6cbd1"></div>
</body></html>
